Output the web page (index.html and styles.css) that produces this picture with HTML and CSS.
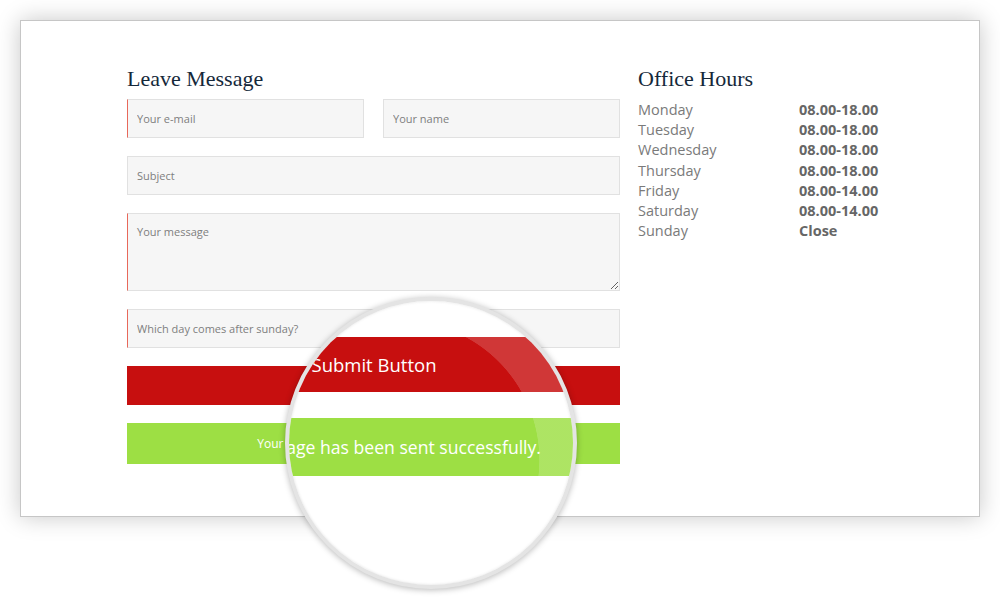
FILE: index.html
```html
<!DOCTYPE html>
<html lang="en">
<head>
<meta charset="utf-8">
<title>Contact</title>
<link rel="stylesheet" href="styles.css">
</head>
<body>
<div class="window">
  <section class="form-col">
    <h2 class="title">Leave Message</h2>
    <form class="form">
      <div class="row-2">
        <input class="field req" type="text" placeholder="Your e-mail">
        <input class="field" type="text" placeholder="Your name">
      </div>
      <input class="field" type="text" placeholder="Subject">
      <textarea class="field area req" placeholder="Your message"></textarea>
      <input class="field req" type="text" placeholder="Which day comes after sunday?">
      <button class="submit" type="button">Submit Button</button>
      <div class="success">Your message has been sent successfully.</div>
    </form>
  </section>
  <aside class="hours-col">
    <h2 class="title">Office Hours</h2>
    <ul class="hours">
      <li><span class="day">Monday</span><span class="time">08.00-18.00</span></li>
      <li><span class="day">Tuesday</span><span class="time">08.00-18.00</span></li>
      <li><span class="day">Wednesday</span><span class="time">08.00-18.00</span></li>
      <li><span class="day">Thursday</span><span class="time">08.00-18.00</span></li>
      <li><span class="day">Friday</span><span class="time">08.00-14.00</span></li>
      <li><span class="day">Saturday</span><span class="time">08.00-14.00</span></li>
      <li><span class="day">Sunday</span><span class="time">Close</span></li>
    </ul>
  </aside>
  <div class="lens">
    <div class="lens-band lens-red">Submit Button</div>
    <div class="lens-band lens-green">Your message has been sent successfully.</div>
    <div class="lens-glare"></div>
  </div>
</div>
</body>
</html>
```

FILE: styles.css
```css
html, body {
  margin: 0;
  padding: 0;
  background: #ffffff;
}
body {
  font-family: "Open Sans", "Liberation Sans", sans-serif;
  width: 1000px;
  height: 598px;
  overflow: hidden;
}
.window {
  position: relative;
  margin: 20px;
  width: 960px;
  height: 497px;
  box-sizing: border-box;
  border: 1px solid #c6c6c6;
  background: #ffffff;
  box-shadow: 0 0 22px rgba(0, 0, 0, 0.22);
  padding: 45px 0 0 106px;
  display: flex;
  gap: 18px;
}
.title {
  margin: 0 0 7px 0;
  font-family: "Liberation Serif", "DejaVu Serif", serif;
  font-weight: normal;
  font-size: 22px;
  line-height: 26px;
  color: #15283a;
}
.form-col {
  width: 493px;
}
.form {
  display: flex;
  flex-direction: column;
  gap: 18px;
}
.row-2 {
  display: grid;
  grid-template-columns: 1fr 1fr;
  gap: 19px;
}
.field {
  display: block;
  box-sizing: border-box;
  width: 100%;
  height: 39px;
  margin: 0;
  padding: 0 9px;
  border: 1px solid #e1e1e1;
  background: #f6f6f6;
  font-family: "Open Sans", "Liberation Sans", sans-serif;
  font-size: 11px;
  color: #777;
  outline: none;
  border-radius: 0;
  box-shadow: none;
  -webkit-appearance: none;
  appearance: none;
}
.field::placeholder {
  color: #7e7e7e;
  opacity: 1;
}
.field.req {
  border-left: 1px solid #e8685a;
}
.area {
  height: 78px;
  padding-top: 10px;
  resize: vertical;
}
.submit {
  display: block;
  width: 100%;
  height: 39px;
  margin: 0;
  border: none;
  background: #c70f0f;
  color: #fff;
  font-family: "Open Sans", "Liberation Sans", sans-serif;
  font-size: 13px;
}
.success {
  height: 41px;
  background: #9ddf44;
  color: #fff;
  font-size: 12px;
  line-height: 41px;
  text-align: center;
}
.hours-col {
  width: 250px;
}
.hours {
  list-style: none;
  margin: 0;
  padding: 1px 0 0 0;
  font-size: 14.5px;
  line-height: 20.2px;
}
.hours li {
  display: flex;
}
.day {
  width: 161px;
  color: #7a7a7a;
}
.time {
  color: #666;
  font-weight: bold;
}

/* magnifier lens overlay */
.lens {
  position: absolute;
  left: 264px;
  top: 276px;
  width: 292px;
  height: 292px;
  box-sizing: border-box;
  border-radius: 50%;
  border: 4px solid #e4e4e4;
  background: #ffffff;
  overflow: hidden;
  box-shadow: 0 1px 6px rgba(0, 0, 0, 0.28), inset 0 0 3px rgba(0, 0, 0, 0.12);
}
.lens-band {
  position: absolute;
  left: -265px;
  width: 700px;
  box-sizing: border-box;
  color: #fff;
  text-align: center;
  white-space: nowrap;
}
.lens-red {
  top: 36px;
  height: 55px;
  line-height: 55px;
  background: #c70f0f;
  font-size: 18.5px;
}
.lens-green {
  top: 117px;
  height: 58px;
  line-height: 58px;
  background: #9ddf44;
  font-size: 17.6px;
  text-align: right;
  padding-right: 183px;
}
.lens-glare {
  position: absolute;
  inset: 0;
  background: radial-gradient(circle at 111px 159px, rgba(255, 255, 255, 0) 139px, rgba(255, 255, 255, 0.17) 139.6px);
}
```
